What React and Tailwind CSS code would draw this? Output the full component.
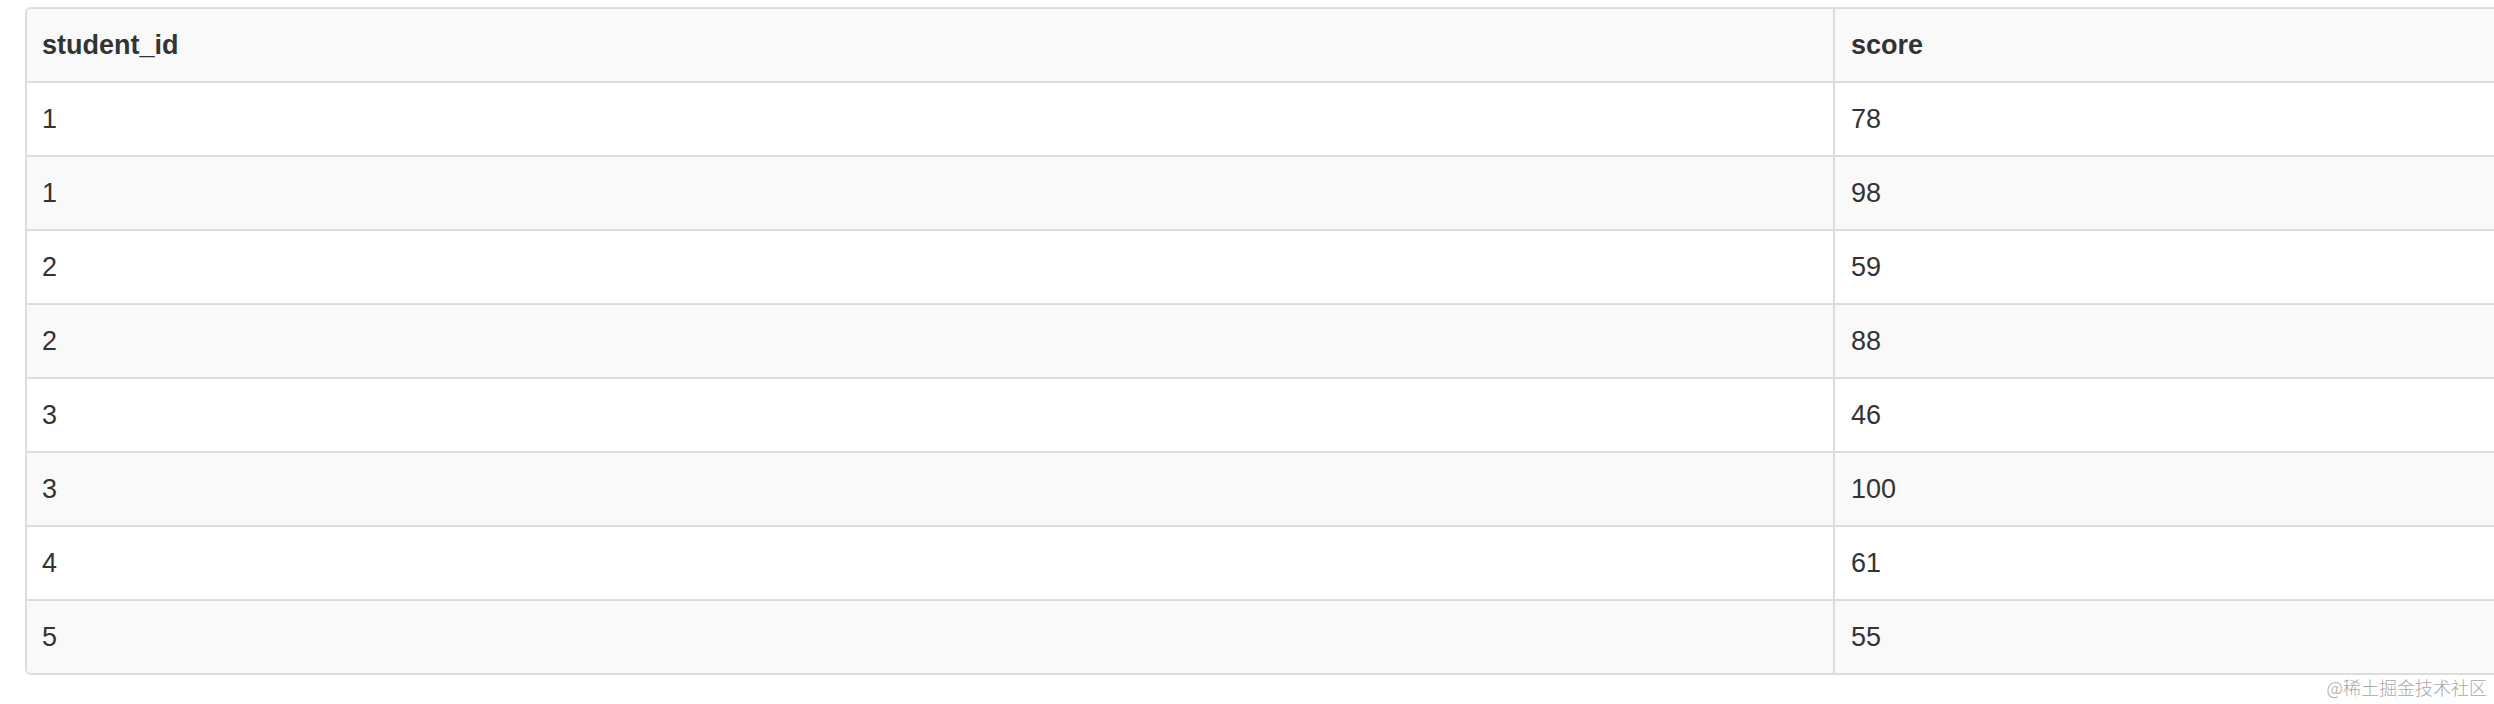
const rows = [
  ["1", "78"],
  ["1", "98"],
  ["2", "59"],
  ["2", "88"],
  ["3", "46"],
  ["3", "100"],
  ["4", "61"],
  ["5", "55"],
];

export default function App() {
  return (
    <div className="w-[2494px] h-[704px] overflow-hidden bg-white font-['Liberation_Sans',Arial,sans-serif] text-[#333333]">
      {/* ================= TABLE ================= */}
      <div className="pl-[25px] pt-[7px]">
        <div className="w-[2600px] border-2 border-[#dddddd] rounded-[6px] overflow-hidden">
          <Row first student="student_id" score="score" header />
          {rows.map(([id, score], i) => (
            <Row key={i} student={id} score={score} striped={i % 2 === 1} />
          ))}
        </div>
      </div>

      {/* ================= WATERMARK ================= */}
      <div className="w-[2494px] pr-[7px] pt-[1px] text-right text-[18px] leading-[22px] text-[#a8a8a8] font-['Noto_Sans_CJK_SC',sans-serif] font-light">
        @稀土掘金技术社区
      </div>
    </div>
  );
}

function Row({ student, score, header, striped, first }) {
  const bg = header || striped ? "bg-[#f9f9f9]" : "bg-white";
  return (
    <div
      className={`flex items-center text-[27px] ${bg} ${
        first ? "h-[72px]" : "h-[74px] border-t-2 border-[#dddddd]"
      } ${header ? "font-bold" : ""}`}
    >
      <div className="w-[1808px] h-full flex items-center px-[15px] border-r-2 border-[#dddddd]">
        {student}
      </div>
      <div className="flex-1 h-full flex items-center px-[16px]">{score}</div>
    </div>
  );
}
